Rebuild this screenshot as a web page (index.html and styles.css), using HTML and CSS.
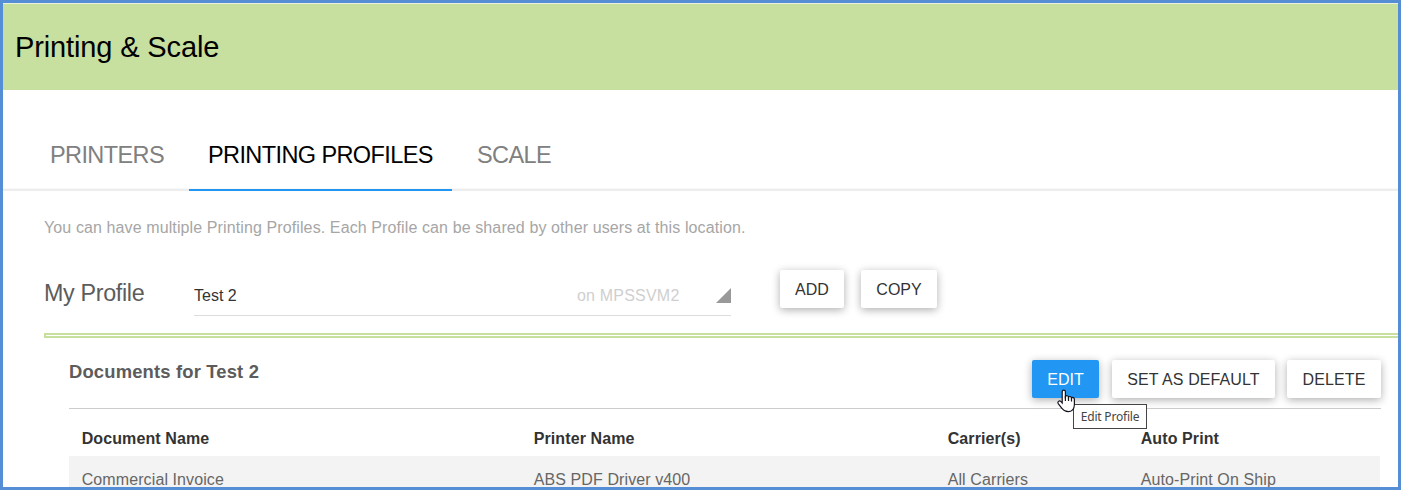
FILE: index.html
```html
<!DOCTYPE html>
<html lang="en">
<head>
<meta charset="utf-8">
<title>Printing &amp; Scale</title>
<link rel="stylesheet" href="styles.css">
</head>
<body>
<div class="window">
  <header class="banner"><h1>Printing &amp; Scale</h1></header>
  <nav class="tabs">
    <a class="tab tab-printers">PRINTERS</a>
    <a class="tab active">PRINTING PROFILES</a>
    <a class="tab">SCALE</a>
  </nav>
  <main class="content">
    <p class="intro">You can have multiple Printing Profiles. Each Profile can be shared by other users at this location.</p>
    <div class="profile">
      <label class="profile-label">My Profile</label>
      <div class="select">
        <span class="value">Test 2</span>
        <span class="host">on MPSSVM2</span>
        <svg class="corner" width="15" height="15" viewBox="0 0 15 15"><path d="M15 0V15H0Z" fill="#999"/></svg>
      </div>
      <button class="btn add">ADD</button>
      <button class="btn copy">COPY</button>
    </div>
    <div class="divider"></div>
    <section class="documents">
      <div class="doc-head">
        <h2>Documents for Test 2</h2>
        <div class="edit-wrap">
          <button class="btn primary">EDIT</button>
          <svg class="cursor" width="19" height="24" viewBox="0 0 19 24"><path d="M5.2 14V2.7C5.2 .5 8.4 .5 8.4 2.7V7.5C9.2 6.2 11.5 6.6 11.5 8.2C12.3 7 14.5 7.4 14.5 9C15.5 8 17.4 8.5 17.4 10.3V15.5C17.4 20 14.7 22.7 11.2 22.7C8.5 22.7 6.6 21.5 5.1 19.5L1.4 14.9C0 12.8 2.3 11 4 12.6Z" fill="#fff" stroke="#15151f" stroke-width="1.2"/><path d="M8.4 7V12M11.5 8V12M14.5 9V12.5" fill="none" stroke="#15151f" stroke-width="1.2"/></svg>
          <span class="tooltip">Edit Profile</span>
        </div>
        <button class="btn default">SET AS DEFAULT</button>
        <button class="btn delete">DELETE</button>
      </div>
      <div class="row head"><span>Document Name</span><span>Printer Name</span><span>Carrier(s)</span><span>Auto Print</span></div>
      <div class="row"><span>Commercial Invoice</span><span>ABS PDF Driver v400</span><span>All Carriers</span><span>Auto-Print On Ship</span></div>
    </section>
  </main>
</div>
</body>
</html>
```
FILE: styles.css
```css
* { box-sizing: border-box; }
body { margin: 0; background: #fff; font: 16px/20px "Liberation Sans", Arial, sans-serif; }
h1, h2, p { margin: 0; font-weight: normal; }
.window { width: 1401px; height: 490px; border: 3px solid #558ed5; overflow: hidden; }
.banner { height: 87px; border-top: 1px solid #e8f2dc; background: #c7df9f; padding: 27px 0 0 12px; }
h1 { font-size: 29px; line-height: 33px; letter-spacing: -.13px; color: #000; }
.tabs { display: flex; height: 101px; padding-top: 45px; border-bottom: 2px solid #ededed; box-shadow: inset 0 -1px #f8f8f8; }
.tab { height: 56px; padding: 6px 19px 0; border-bottom: 2px solid transparent; font-size: 23.5px; line-height: 28px; letter-spacing: -.6px; color: #808080; white-space: nowrap; }
.tab-printers { width: 139px; margin-left: 28px; }
.tab.active { width: 263px; margin-right: 6px; color: #000; border-color: #2196f3; }
.tab-printers + .active { margin-left: 19px; }
.content { padding-left: 41px; }
.intro { padding-top: 27px; letter-spacing: .11px; color: #a6a6a6; white-space: nowrap; }
.profile { display: flex; height: 95px; padding-top: 32px; }
.profile-label { width: 150px; padding-top: 10px; font-size: 23.3px; line-height: 27px; letter-spacing: -.33px; color: #5c5c5c; }
.select { display: flex; align-items: flex-start; width: 537px; height: 46px; padding-top: 16px; border-bottom: 1px solid #ddd; color: #333; }
.value { flex: 1; }
.host { width: 138px; letter-spacing: .2px; color: #cfcfcf; }
.corner { margin-top: 2px; margin-left: 1px; }
.btn { flex: none; height: 38px; padding: 2px 0 0; border: 0; border-radius: 2px; background: #fff; color: #333; font: inherit; text-align: center; box-shadow: 0 2px 8px rgba(0, 0, 0, .32); }
.add { width: 64px; margin-left: 49px; }
.copy { width: 76px; margin-left: 17px; }
.divider { height: 5px; border: solid #c7df9f; border-width: 2px 0 2px 2px; }
.documents { width: 1312px; margin-left: 25px; }
.doc-head { display: flex; height: 71px; padding-top: 22px; border-bottom: 1px solid #ccc; }
h2 { flex: 1; padding-top: 2px; font-size: 18.4px; font-weight: bold; letter-spacing: .17px; color: #5c5c5c; }
.edit-wrap { position: relative; }
.primary { width: 67px; background: #2196f3; color: #fff; }
.cursor { position: absolute; left: 25px; top: 29px; z-index: 2; }
.tooltip { position: absolute; left: 41px; top: 44px; z-index: 1; width: 74px; height: 25px; border: 1px solid #444; background: #fff; color: #444; font: 12px/23px "Noto Sans", sans-serif; letter-spacing: -.2px; text-align: center; white-space: nowrap; }
.default { width: 163px; margin-left: 13px; letter-spacing: .1px; }
.delete { width: 94px; margin-left: 12px; letter-spacing: .1px; }
.row { display: grid; grid-template-columns: 452px 414px 193px 1fr; width: 1311px; height: 47px; padding: 14px 0 0 12.7px; letter-spacing: .1px; background: #f3f3f3; color: #666; }
.head { padding-top: 20px; background: #fff; color: #333; font-weight: bold; }
```
